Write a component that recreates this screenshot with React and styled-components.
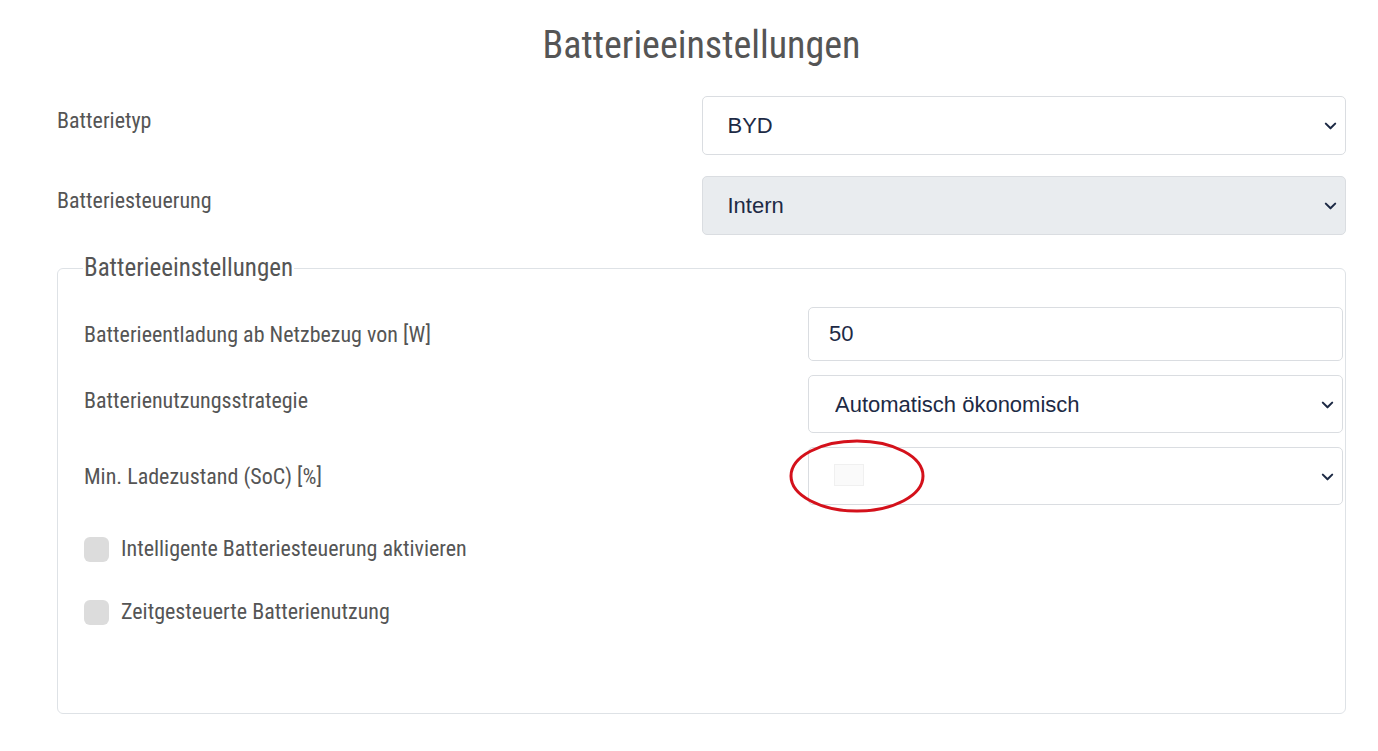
import React from 'react';
import styled, { createGlobalStyle } from 'styled-components';

const GlobalStyle = createGlobalStyle`
  * {
    box-sizing: border-box;
  }

  body {
    margin: 0;
    padding: 0;
    background: #fff;
    font-family: "Roboto Condensed", Roboto, "Liberation Sans", sans-serif;
  }
`;

const chevron = encodeURIComponent(
  `<svg xmlns="http://www.w3.org/2000/svg" viewBox="0 0 16 16"><path fill="none" stroke="#1d2a45" stroke-linecap="round" stroke-linejoin="round" stroke-width="2.2" d="M3 6l5 5 5-5"/></svg>`
);

const Page = styled.div`
  padding: 0 32px 0 57px;
`;

const Title = styled.h1`
  margin: 0;
  padding: 24px 0 30px;
  text-align: center;
  font-size: 38px;
  line-height: 42px;
  font-weight: 400;
  font-stretch: condensed;
  color: #555;
`;

const Row = styled.div`
  display: grid;
  grid-template-columns: ${(p) => p.$cols || '1fr 1fr'};
  align-items: center;
  margin-bottom: ${(p) => p.$gap || 0}px;
`;

const Label = styled.label`
  font-size: 22px;
  font-stretch: condensed;
  color: #555;
  padding-bottom: ${(p) => p.$lift || 0}px;
`;

const Select = styled.select`
  appearance: none;
  -webkit-appearance: none;
  width: 100%;
  height: ${(p) => p.$h || 59}px;
  padding: 0 40px 0 ${(p) => p.$pl || 25}px;
  border: 1px solid #dadde1;
  border-radius: 5px;
  background-color: ${(p) => (p.disabled ? '#e9ecef' : '#fff')};
  background-image: url("data:image/svg+xml,${chevron}");
  background-repeat: no-repeat;
  background-position: right 7px center;
  background-size: 15px 15px;
  font-family: "Liberation Sans", Arial, sans-serif;
  font-size: 22px;
  color: #1d2a45;
  opacity: 1;
  outline: none;
`;

const Input = styled.input`
  width: 100%;
  height: 54px;
  padding: 0 20px;
  border: 1px solid #dadde1;
  border-radius: 5px;
  background: #fff;
  font-family: "Liberation Sans", Arial, sans-serif;
  font-size: 22px;
  color: #1d2a45;
  outline: none;
`;

const Fieldset = styled.fieldset`
  margin: 20px 0 0;
  padding: 26px 2px 88px 26px;
  border: 1px solid #dee2e6;
  border-radius: 6px;
  min-width: 0;
`;

const Legend = styled.legend`
  padding: 0 1px;
  margin-left: -1px;
  font-size: 25px;
  line-height: 26px;
  font-stretch: condensed;
  color: #555;
`;

const Field = styled.div`
  position: relative;
`;

const Marker = styled.svg`
  position: absolute;
  left: -19px;
  top: -8px;
  width: 136px;
  height: 74px;
  pointer-events: none;
`;

const Ghost = styled.span`
  position: absolute;
  left: 26px;
  top: 17px;
  width: 30px;
  height: 22px;
  border: 1px solid #f0f0f0;
  background: #fafafa;
  pointer-events: none;
`;

const CheckRow = styled.label`
  display: flex;
  align-items: center;
  gap: 12px;
  margin-top: ${(p) => p.$mt}px;
  font-size: 22px;
  font-stretch: condensed;
  color: #555;
`;

const Box = styled.span`
  width: 25px;
  height: 25px;
  border-radius: 6px;
  background: #dcdcdc;
  flex-shrink: 0;
  margin-top: 2px;
`;

export default function App() {
  return (
    <>
      <GlobalStyle />
      <Page>
        <Title>Batterieeinstellungen</Title>

        <Row $gap={21}>
          <Label $lift={10}>Batterietyp</Label>
          <Select defaultValue="byd">
            <option value="byd">BYD</option>
          </Select>
        </Row>

        <Row>
          <Label $lift={10}>Batteriesteuerung</Label>
          <Select disabled defaultValue="intern">
            <option value="intern">Intern</option>
          </Select>
        </Row>

        <Fieldset>
          <Legend>Batterieeinstellungen</Legend>

          <Row $cols="1fr 535px" $gap={14}>
            <Label>Batterieentladung ab Netzbezug von [W]</Label>
            <Input defaultValue="50" />
          </Row>

          <Row $cols="1fr 535px" $gap={14}>
            <Label $lift={8}>Batterienutzungsstrategie</Label>
            <Select $h={58} $pl={26} defaultValue="auto">
              <option value="auto">Automatisch ökonomisch</option>
            </Select>
          </Row>

          <Row $cols="1fr 535px">
            <Label>Min. Ladezustand (SoC) [%]</Label>
            <Field>
              <Select $h={58} defaultValue="">
                <option value=""></option>
              </Select>
              <Ghost />
              <Marker viewBox="0 0 136 74">
                <ellipse cx="68" cy="37" rx="66" ry="35" fill="none" stroke="#d4111b" strokeWidth="3" />
              </Marker>
            </Field>
          </Row>

          <CheckRow $mt={30}>
            <Box />
            Intelligente Batteriesteuerung aktivieren
          </CheckRow>

          <CheckRow $mt={36}>
            <Box />
            Zeitgesteuerte Batterienutzung
          </CheckRow>
        </Fieldset>
      </Page>
    </>
  );
}
